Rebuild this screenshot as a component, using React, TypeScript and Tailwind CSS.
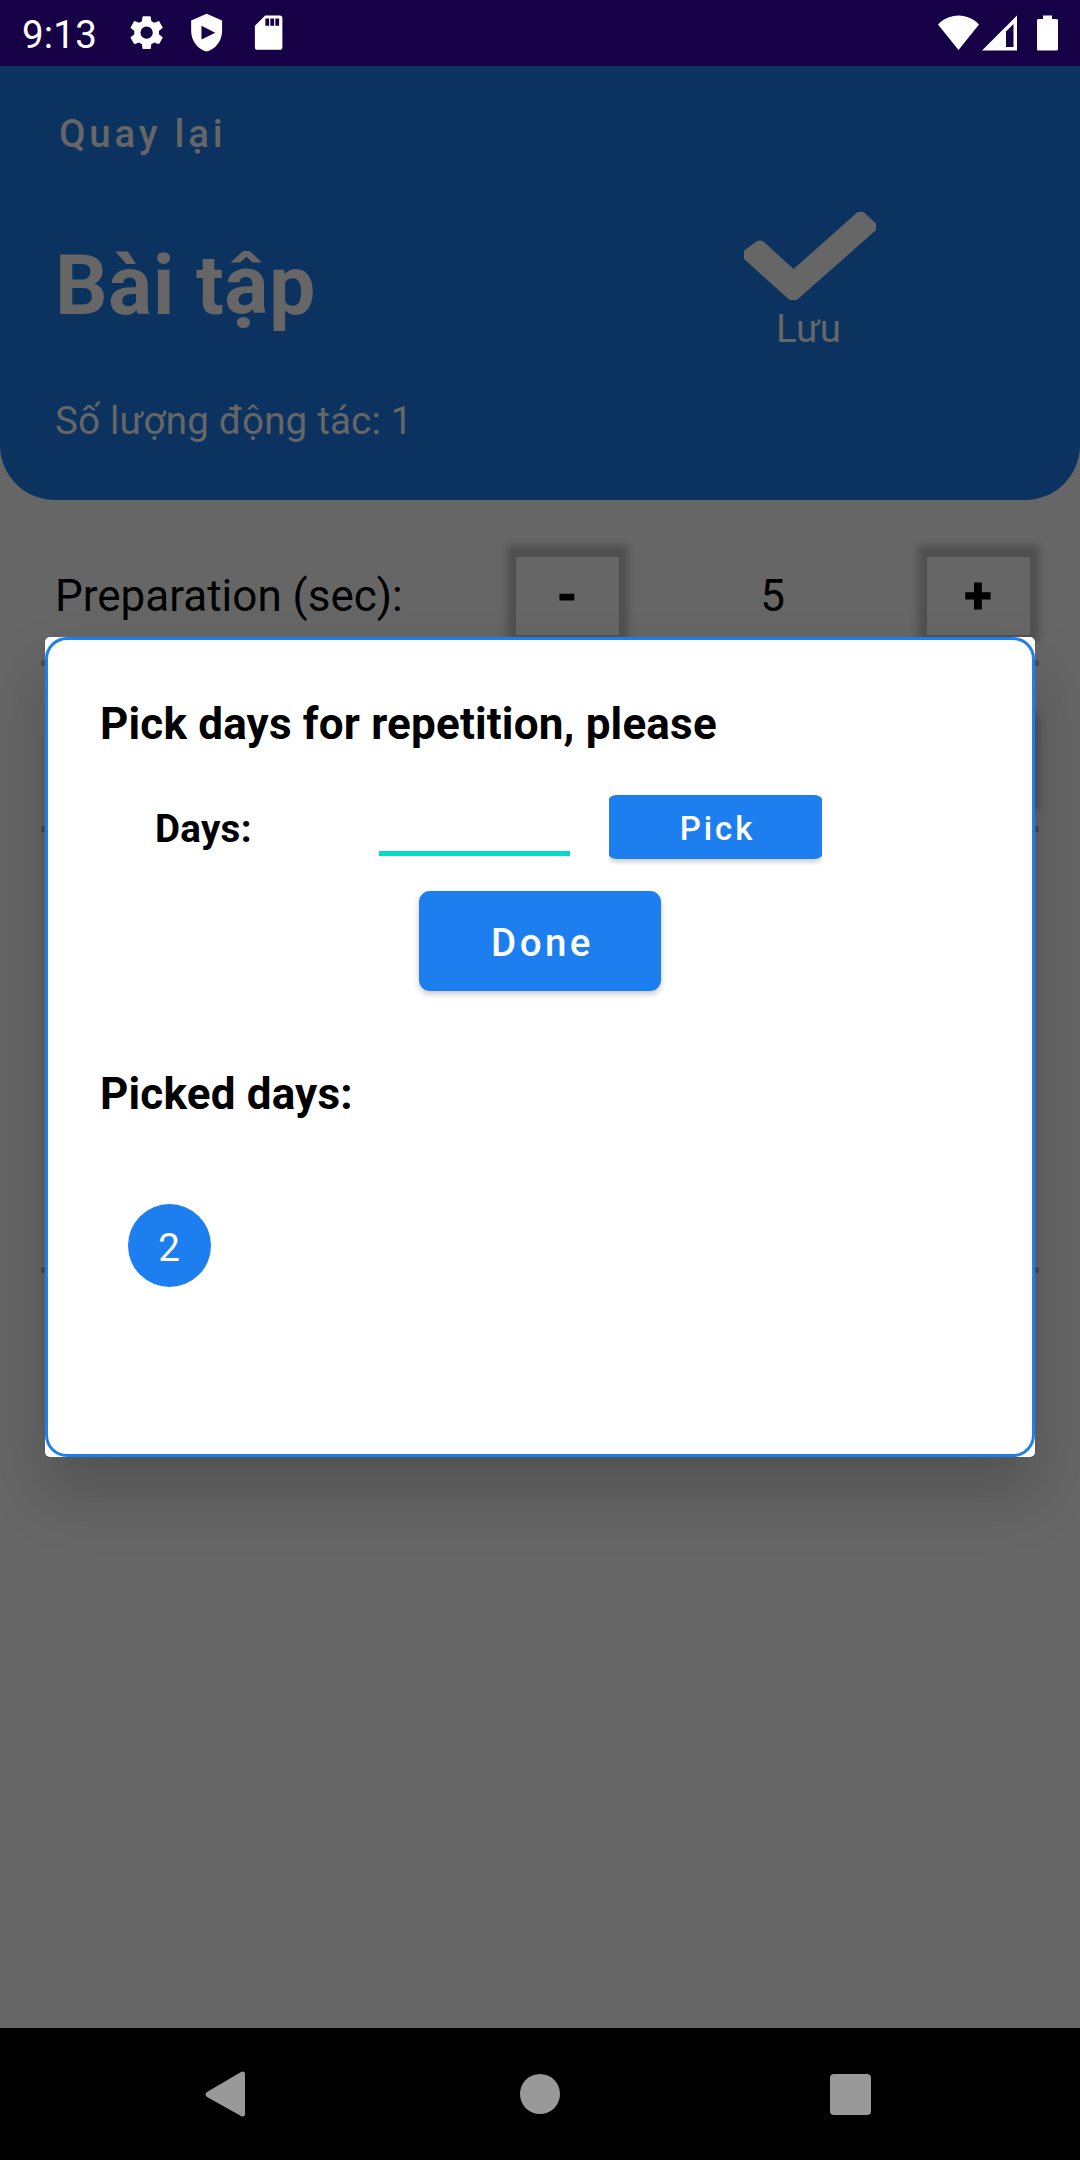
import React from "react";

function StatusBar() {
  return (
    <div className="flex h-[66px] shrink-0 items-center bg-[#160046] text-white">
      <span className="w-[104px] shrink-0 pt-[3px] pl-[22px] text-[38.5px] leading-[60px] tracking-[0.2px]">9:13</span>
      <div className="flex items-center gap-[19.5px] pl-[21.5px]">
        <svg className="size-[41.25px]" viewBox="0 0 24 24" fill="currentColor">
          <path d="M19.14 12.94c.04-.3.06-.61.06-.94 0-.32-.02-.64-.07-.94l2.03-1.58c.18-.14.23-.41.12-.61l-1.92-3.32c-.12-.22-.37-.29-.59-.22l-2.39.96c-.5-.38-1.03-.7-1.62-.94l-.36-2.54c-.04-.24-.24-.41-.48-.41h-3.84c-.24 0-.43.17-.47.41l-.36 2.54c-.59.24-1.13.57-1.62.94l-2.39-.96c-.22-.08-.47 0-.59.22L2.74 8.87c-.12.21-.08.47.12.61l2.03 1.58c-.05.3-.09.63-.09.94s.02.64.07.94l-2.03 1.58c-.18.14-.23.41-.12.61l1.92 3.32c.12.22.37.29.59.22l2.39-.96c.5.38 1.03.7 1.62.94l.36 2.54c.05.24.24.41.48.41h3.84c.24 0 .44-.17.47-.41l.36-2.54c.59-.24 1.13-.56 1.62-.94l2.39.96c.22.08.47 0 .59-.22l1.92-3.32c.12-.22.07-.47-.12-.61l-2.01-1.58zM12 15.6a3.6 3.6 0 1 1 0-7.2 3.6 3.6 0 0 1 0 7.2z" />
        </svg>
        <svg className="size-[41.25px]" viewBox="0 0 24 24" fill="currentColor" fillRule="evenodd">
          <path d="M12 1 3 5v6c0 5.55 3.84 10.74 9 12 5.16-1.26 9-6.45 9-12V5l-9-4zM9 8l8 4-8 4V8z" />
        </svg>
        <svg className="ml-[0.5px] size-[41.25px]" viewBox="0 0 24 24" fill="currentColor" fillRule="evenodd">
          <path d="M18.6 2H10L4 8v12.6c0 .8.6 1.4 1.4 1.4h13.2c.8 0 1.4-.6 1.4-1.4V3.4c0-.8-.6-1.4-1.4-1.4zM12.3 8H10.1V3.8h2.2V8zm2.9 0h-2.2V3.8h2.2V8zm2.9 0h-2.2V3.8h2.2V8z" />
        </svg>
      </div>
      <div className="ml-auto flex pr-[22px] pb-[1px]">
        <svg className="h-[36px] w-[41px]" viewBox="0 0 41 36" fill="currentColor">
          <path d="M0 9.5C5 4 12.5.5 20.5.5S36 4 41 9.500L20.5 35z" />
        </svg>
        <svg className="ml-[3px] h-[36px] w-[35px]" viewBox="0 0 35 36" fill="currentColor" fillRule="evenodd">
          <path d="M35 .5V35.5H0zM31.5 9 24 16.5V32h7.5z" />
        </svg>
        <svg className="ml-[20px] h-[36px] w-[21px]" viewBox="0 0 21 36" fill="currentColor">
          <path d="M6 .5h9V4h4.5C20.3 4 21 4.7 21 5.5v28.5c0 .9-.7 1.6-1.5 1.6h-18C.7 35.6 0 34.9 0 34V5.5C0 4.7.7 4 1.5 4H6z" />
        </svg>
      </div>
    </div>
  );
}

function Header() {
  return (
    <header className="h-[434px] shrink-0 rounded-b-[55px] bg-[#0c325f] text-[38.5px] text-[#666]">
      <div className="flex h-[136px] items-center pl-[59px] font-medium tracking-[3.75px]">Quay lại</div>
      <div className="flex h-[168px] justify-between pr-[204px] pl-[55px]">
        <h1 className="text-[82.5px] leading-[168px] font-bold tracking-[0.45px]">Bài tập</h1>
        <div className="flex w-[132px] flex-col items-center pt-[10px]">
          <svg className="h-[88px] w-[132px] shrink-0" viewBox="0 0 132 88" fill="currentColor">
            <path d="M0 38.5 12.5 29.5q3.5-2 7 0L49.5 57 112 1.5 114 0h5.5L132 11.5V18L54 87 52 88H46L44 86.5 0 47z" />
          </svg>
          <span className="-ml-[3px] leading-[58px]">Lưu</span>
        </div>
      </div>
      <div className="flex h-[102px] items-center pl-[55px] tracking-[0.2px]">Số lượng động tác: 1</div>
    </header>
  );
}

function StepButton({ label }: { label: string }) {
  return (
    <button className="h-[78px] w-[103px] pr-[1px] pt-[1px] text-[49.5px] leading-[77px] font-bold [-webkit-text-stroke:1.2px_black] shadow-[0_-3px_7px_9px_rgba(0,0,0,0.22)]">
      {label}
    </button>
  );
}

function DaysDialog() {
  return (
    <div className="absolute top-[637px] left-[45px] h-[820px] w-[990px] rounded-[5px] bg-white shadow-[0_35px_64px_rgba(0,0,0,0.2)]">
      <div className="flex h-full flex-col rounded-[22px] border-[3px] border-[#1d7eef] px-[52px] text-black">
        <h2 className="mt-[58px] text-[44px] leading-[52px] font-bold tracking-[0.18px]">
          Pick days for repetition, please
        </h2>
        <div className="mt-[45px] flex h-[64px] items-center pl-[55px]">
          <label className="w-[224px] pt-[4px] text-[38.5px] leading-[60px] font-bold tracking-[0.3px]">Days:</label>
          <input className="h-[61px] w-[191px] self-start border-b-[5px] border-[#00dcc8] outline-none" />
          <div className="ml-[39px] w-[213px] overflow-x-clip">
            <button className="-ml-[3px] h-[64px] w-[219px] rounded-[11px] bg-[#1d7eef] pt-[3px] pl-[4px] text-[33px] leading-[61px] font-medium tracking-[2.95px] text-white shadow-[0_3px_5px_rgba(0,0,0,0.2)]">
              Pick
            </button>
          </div>
        </div>
        <button className="mt-[32px] h-[100px] w-[242px] self-center rounded-[11px] bg-[#1d7eef] pt-[3px] pl-[5px] text-[38.5px] leading-[97px] font-medium tracking-[3.44px] text-white shadow-[0_3px_6px_rgba(0,0,0,0.22)]">
          Done
        </button>
        <h2 className="mt-[77px] text-[44px] leading-[52px] font-bold tracking-[0.18px]">Picked days:</h2>
        <div className="mt-[84px] ml-[28px] flex size-[83px] items-center justify-center rounded-full bg-[#1d7eef] pt-[4px] pr-[1px] text-[38.5px] text-white">
          2
        </div>
      </div>
    </div>
  );
}

function NavBar() {
  return (
    <nav className="flex h-[132px] shrink-0 items-center bg-black pl-[205px] text-[#999]">
      <svg className="h-[46px] w-[40px]" viewBox="0 0 40 46" fill="currentColor">
        <path d="M2 21 36 1c2.5-1.5 4 0 4 2v40c0 2-1.5 3.5-4 2L2 26q-3-2.5 0-5z" />
      </svg>
      <span className="ml-[275px] size-[40px] rounded-full bg-[#999]" />
      <span className="ml-[270px] size-[41px] rounded-[4px] bg-[#999]" />
    </nav>
  );
}

export default function App() {
  return (
    <div className="relative flex h-[2160px] w-[1080px] flex-col overflow-hidden bg-[#666] font-['Roboto',sans-serif]">
      <StatusBar />
      <Header />
      <main className="flex-1 px-[41px] text-black">
        <div className="flex h-[166px] items-center border-b-[6px] border-[#4d4d4d] pt-[32px] pr-[9px] pl-[14px] text-[44px]">
          <span className="w-[461px]">Preparation (sec):</span>
          <StepButton label="-" />
          <span className="flex-1 pr-[1px] text-center">5</span>
          <StepButton label="+" />
        </div>
        <div className="flex h-[166px] items-center justify-end border-b-[6px] border-[#4d4d4d] pt-[38px] pr-[9px]">
          <StepButton label="" />
        </div>
        <div className="h-[441px] border-b-[6px] border-[#4d4d4d]" />
      </main>
      <NavBar />
      <DaysDialog />
    </div>
  );
}
